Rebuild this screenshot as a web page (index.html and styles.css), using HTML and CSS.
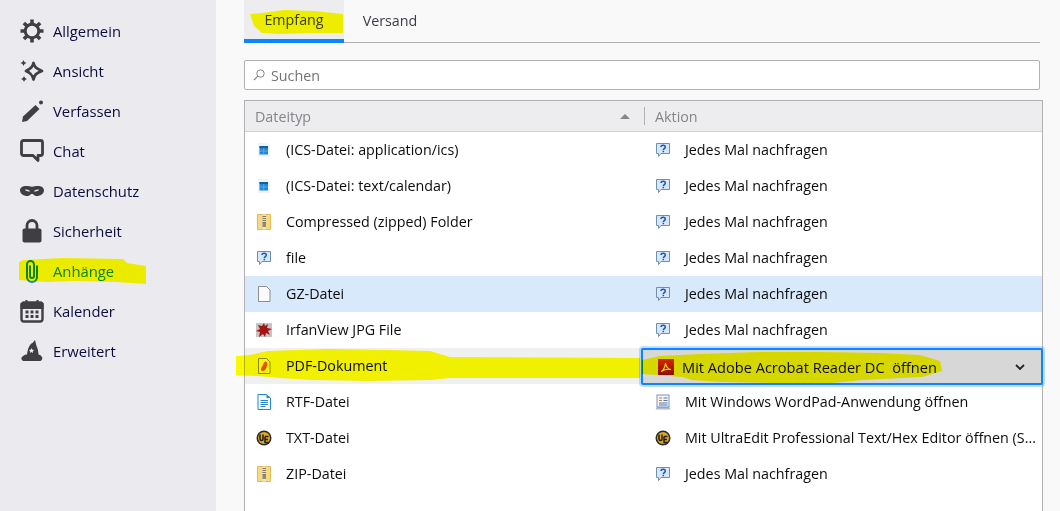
FILE: index.html
```html
<!DOCTYPE html>
<html lang="de">
<head>
<meta charset="utf-8">
<title>Anhänge</title>
<link rel="stylesheet" href="styles.css">
</head>
<body>
<svg class="defs" width="0" height="0">
  <defs>
    <symbol id="q" viewBox="0 0 16 16"><path d="M1.500 1.500h13v10H6l-2.500 3v-3h-2z" fill="#d6e7f8" stroke="#6f8fb0"/><path d="M6 5c0-2.400 4.300-2.400 4.300 0 0 1.600-2 1.600-2 3.200M8.300 9v1.300" fill="none" stroke="#1c54c0" stroke-width="1.500"/></symbol>
    <symbol id="ics" viewBox="0 0 16 16"><path d="M2 1h9l3 3v11H2z" fill="#f0f3f7"/><rect x="3.500" y="4" width="8.500" height="8.500" fill="#1f86d8"/><rect x="3.500" y="4" width="8.500" height="2" fill="#10609f"/><path d="M7.800 6v6.500M3.500 9h8.500" stroke="#8cc3ee" stroke-width=".6"/></symbol>
    <symbol id="zip" viewBox="0 0 16 16"><path d="M1.500 .5h13v15h-13z" fill="#f6d981" stroke="#e0bb5c"/><rect x="6.500" y=".5" width="3.500" height="15" fill="#e9e4cf"/><path d="M6.500 2.500h3.500M6.500 4.500h3.500M6.500 6.500h3.500M6.500 8.500h3.500" stroke="#77756b"/><rect x="6.500" y="9" width="3.500" height="4" fill="#8d8a80"/></symbol>
    <symbol id="ue" viewBox="0 0 16 16"><circle cx="8" cy="8" r="7.500" fill="#2a2a2a"/><circle cx="8" cy="8" r="6" fill="#e0a81c"/><path d="M4 4.500v4.500c0 2 3 2 3 0V4.500M9 6.500h3.500M9 6.500v6h3.500M9 9.500h3" fill="none" stroke="#1c1c1c" stroke-width="1.500"/></symbol>
  </defs>
</svg>
<div class="app">
  <nav class="side">
    <a class="nav">
      <svg class="ico" viewBox="0 0 24 24"><circle cx="12" cy="12" r="6.800" fill="none" stroke="#3f3f42" stroke-width="3"/><path d="M12 .5v5M12 18.500v5M.5 12h5M18.500 12h5M3.900 3.900l3.600 3.600M16.500 16.500l3.600 3.600M3.900 20.100l3.600-3.600M16.500 7.500l3.600-3.600" stroke="#3f3f42" stroke-width="3.600"/></svg>
      <span>Allgemein</span></a>
    <a class="nav">
      <svg class="ico" viewBox="0 0 24 24"><path d="M13.500 4c1 4 2.500 5.500 8.500 8-6 2-7.500 4-8.500 8.500-1-4.500-2.500-6.500-7.500-8.500 5-2.500 6.500-4 7.500-8z" fill="none" stroke="#3f3f42" stroke-width="2.800" stroke-linejoin="round"/><path d="M3.500 1l1 2 2 1-2 1-1 2-1-2-2-1 2-1zM4 17l1 2 2 1-2 1-1 2-1-2-2-1 2-1z" fill="#3f3f42"/></svg>
      <span>Ansicht</span></a>
    <a class="nav">
      <svg class="ico" viewBox="0 0 24 24"><path d="M2 23l1-5.500L15.500 6l4 4L7 22z" fill="#3f3f42"/><circle cx="21" cy="3.500" r="2" fill="#3f3f42"/></svg>
      <span>Verfassen</span></a>
    <a class="nav">
      <svg class="ico" viewBox="0 0 24 24"><path d="M3.500 1.500h17a2 2 0 0 1 2 2v11a2 2 0 0 1-2 2H18v5l-5-5H3.500a2 2 0 0 1-2-2v-11a2 2 0 0 1 2-2z" fill="none" stroke="#3f3f42" stroke-width="2.800" stroke-linejoin="round"/></svg>
      <span>Chat</span></a>
    <a class="nav">
      <svg class="ico" viewBox="0 0 24 24"><path fill-rule="evenodd" d="M6 5c3 0 4 1 6 1s3-1 6-1c3 0 6 2 6 6 0 5-4 8-7 8-3 0-3-3-5-3s-2 3-5 3c-3 0-7-3-7-8 0-4 3-6 6-6zM5 10c0 2 3 3 5 2.500 0-1.500-3-3-5-2.500zM19 10c-2-.5-5 1-5 2.500 2 .5 5-.5 5-2.500z" fill="#3f3f42" transform="matrix(1 0 0 .72 0 3.400)"/></svg>
      <span>Datenschutz</span></a>
    <a class="nav">
      <svg class="ico" viewBox="0 0 24 24"><path d="M7 10V6.500a5 5 0 0 1 10 0V10" fill="none" stroke="#3f3f42" stroke-width="2.800"/><rect x="2.500" y="9.500" width="19" height="14" rx="2" fill="#3f3f42"/></svg>
      <span>Sicherheit</span></a>
    <a class="nav nav-on">
      <svg class="ico" viewBox="0 0 24 24"><path d="M10 6.500V17a2 2 0 0 0 4 0V5.500a3.500 3.500 0 0 0-7 0V18a5 5 0 0 0 10 0V6.500" fill="none" stroke="#0a84ff" stroke-width="2"/></svg>
      <span>Anhänge</span></a>
    <a class="nav">
      <svg class="ico" viewBox="0 0 24 24"><path d="M4 3.500h16a2.500 2.500 0 0 1 2.500 2.500v14a2.500 2.500 0 0 1-2.500 2.500H4A2.500 2.500 0 0 1 1.500 20V6A2.500 2.500 0 0 1 4 3.500z" fill="none" stroke="#3f3f42" stroke-width="2.400"/><path d="M1.500 5h21v4h-21zM6.500 1v5M17.500 1v5" stroke="#3f3f42" stroke-width="2" fill="#3f3f42"/><path d="M5.500 11.500h3v3h-3zM10.500 11.500h3v3h-3zM15.500 11.500h3v3h-3zM5.500 16h3v3h-3zM10.500 16h3v3h-3zM15.500 16h3v3h-3z" fill="#3f3f42"/></svg>
      <span>Kalender</span></a>
    <a class="nav">
      <svg class="ico" viewBox="0 0 24 24"><path d="M15 1l-2.500 3c-3 1-5 6-5.500 12h11.500c0-4-1-7-2-9z" fill="#3f3f42"/><path d="M2 18c2-2 3.500-2.500 5-2.500h11c1.500 0 3 .8 4 2.500 1 1.500-.5 4-2 4H4c-2 0-3.500-2.500-2-4z" fill="#3f3f42"/><path d="M11.500 9l.8 1.700 1.800.2-1.300 1.300.3 1.800-1.600-.9-1.600.9.300-1.800-1.300-1.300 1.800-.2z" fill="#ebebef"/></svg>
      <span>Erweitert</span></a>
  </nav>

  <main class="main">
    <div class="tabs">
      <div class="tab tab-on">Empfang</div>
      <div class="tab">Versand</div>
    </div>
    <div class="search">
      <svg class="search-ico" viewBox="0 0 12 12"><circle cx="7.500" cy="4.500" r="3.700" fill="none" stroke="#85858a"/><path d="M4.800 7.200L1 11" stroke="#85858a" stroke-width="1.200"/></svg>
      <span>Suchen</span>
    </div>
    <div class="table">
      <div class="thead">
        <div class="th th-name"><span>Dateityp</span><i class="sort"></i></div>
        <div class="th th-act"><span>Aktion</span></div>
      </div>
      <div class="row"><div class="cell-name"><svg class="fi"><use href="#ics"/></svg>(ICS-Datei: application/ics)</div><div class="cell-act"><svg class="fi"><use href="#q"/></svg><span class="act-text">Jedes Mal nachfragen</span></div></div>
      <div class="row"><div class="cell-name"><svg class="fi"><use href="#ics"/></svg>(ICS-Datei: text/calendar)</div><div class="cell-act"><svg class="fi"><use href="#q"/></svg><span class="act-text">Jedes Mal nachfragen</span></div></div>
      <div class="row"><div class="cell-name"><svg class="fi"><use href="#zip"/></svg>Compressed (zipped) Folder</div><div class="cell-act"><svg class="fi"><use href="#q"/></svg><span class="act-text">Jedes Mal nachfragen</span></div></div>
      <div class="row"><div class="cell-name"><svg class="fi"><use href="#q"/></svg>file</div><div class="cell-act"><svg class="fi"><use href="#q"/></svg><span class="act-text">Jedes Mal nachfragen</span></div></div>
      <div class="row row-hover"><div class="cell-name"><svg class="fi" viewBox="0 0 16 16"><path d="M2.500 .5h8l3.500 3.500v11.500H2.500z" fill="#fafafa" stroke="#8d8d8d"/></svg>GZ-Datei</div><div class="cell-act"><svg class="fi"><use href="#q"/></svg><span class="act-text">Jedes Mal nachfragen</span></div></div>
      <div class="row"><div class="cell-name"><svg class="fi" viewBox="0 0 16 16"><rect x="0" y="1" width="16" height="14" fill="#c9c4c4"/><path d="M8 1l1 3 3-2-1 4 5 1-4 2 2 4-4-2-1 4-2-3-4 3 1-5-4-1 4-2-2-4 4 1z" fill="#a31515"/></svg>IrfanView JPG File</div><div class="cell-act"><svg class="fi"><use href="#q"/></svg><span class="act-text">Jedes Mal nachfragen</span></div></div>
      <div class="row row-sel"><div class="cell-name"><svg class="fi" viewBox="0 0 16 16"><path d="M2.500 .5h8l3.500 3.500v11.500H2.500z" fill="#fbf6d8" stroke="#8a8a40"/><path d="M9.500 3.500c1.500 0 2 1.500 1.500 4s-1.500 5-4 5.500c-2.500 .5-2.500-2-1.500-3.500 1.500-2 2.500-6 4-6z" fill="#e8501c"/></svg>PDF-Dokument</div>
        <div class="cell-act cell-drop"><svg class="fi" viewBox="0 0 16 16"><defs><linearGradient id="pdfg" x1="0" y1="0" x2="0" y2="1"><stop offset="0" stop-color="#d8231c"/><stop offset="1" stop-color="#8c0f0a"/></linearGradient></defs><rect width="16" height="16" fill="url(#pdfg)"/><path d="M3 12.500c2-1 4-4.500 4.500-8.500.5 4 2.500 6 5.500 6.500-3-.5-7 0-10 2z" fill="none" stroke="#f7e3d3" stroke-width="1.100"/></svg><span class="drop-text">Mit Adobe Acrobat Reader DC &nbsp;öffnen</span><svg class="chev" viewBox="0 0 10 6"><path d="M1 1l4 4 4-4" fill="none" stroke="#222" stroke-width="1.800"/></svg></div></div>
      <div class="row"><div class="cell-name"><svg class="fi" viewBox="0 0 16 16"><path d="M2 .5h8.500L14.500 4v11.500H2z" fill="#f4faff" stroke="#2a86cc"/><path d="M10.500 .5V4h4z" fill="#2a86cc"/><path d="M4.500 6.500h7.500M4.500 8.500h7.500M4.500 10.500h7.500M4.500 12.500h5" stroke="#2a86cc"/></svg>RTF-Datei</div><div class="cell-act"><svg class="fi" viewBox="0 0 16 16"><path d="M2 13l-1.500 2.500h15L14 13z" fill="#a9bcd6"/><rect x="2" y="1" width="12" height="12" fill="#f1f5fb" stroke="#7f93b5"/><path d="M4 4h3M4 6.500h3" stroke="#e0792b"/><path d="M8.500 4h4M8.500 6.500h4M4 9h8.500M4 11h8.500" stroke="#5578a6"/></svg><span class="act-text">Mit Windows WordPad-Anwendung öffnen</span></div></div>
      <div class="row"><div class="cell-name"><svg class="fi"><use href="#ue"/></svg>TXT-Datei</div><div class="cell-act"><svg class="fi"><use href="#ue"/></svg><span class="act-text">Mit UltraEdit Professional Text/Hex Editor öffnen (S...</span></div></div>
      <div class="row"><div class="cell-name"><svg class="fi"><use href="#zip"/></svg>ZIP-Datei</div><div class="cell-act"><svg class="fi"><use href="#q"/></svg><span class="act-text">Jedes Mal nachfragen</span></div></div>
    </div>
  </main>

  <svg class="marker" viewBox="0 0 1060 511" width="1060" height="511">
    <path d="M250 14l12-1 22-3 30 1 29 3v19l-28 0-35 1-18-1-8-7z"/>
    <path d="M19 262l4-2 40-2 60 1 4 4 19 3v18l-30-2-40-1-30 1-27-2z"/>
    <path d="M236 356l14-1 18-4 60-2 60 1 42 1 20 6 190 1v20l-190 0-20 2-60 1-60-1-30-2-22-2-22-1z"/>
    <path d="M642 360l18 -4 40-2 60-2 60 0 60 1 40 2 20 6 2 10-20 6-60 3-30 3-60 0-50-1-30-2-10-3-40-3z"/>
  </svg>
</div>
</body>
</html>
```
FILE: styles.css
```css
* { box-sizing: border-box; }
html, body { margin: 0; height: 511px; overflow: hidden; }
body { font-family: "Open Sans", "Noto Sans", sans-serif; font-size: 14.300px; color: #0c0c0d; }
.defs { position: absolute; }
.app { display: flex; height: 511px; width: 1060px; position: relative; background: #f9f9fa; }

.side { width: 216px; flex: none; background: #ebebef; padding: 11px 0 0 20px; }
.nav { display: flex; align-items: center; gap: 9px; height: 40px; color: #0c0c3d; font-size: 14.800px; }
.ico { width: 24px; height: 24px; flex: none; }
.nav-on { color: #0a84ff; }

.main { flex: none; width: 844px; padding: 0 17px 0 28px; }
.tabs { display: flex; height: 43px; border-bottom: 1px solid #b1b1b3; padding-right: 3px; margin-right: 3px; }
.tab { width: 92px; display: flex; align-items: center; justify-content: center; padding-bottom: 2px; color: #3d3d4a; font-size: 14.300px; }
.tab-on { width: 100px; background: #ededf0; border-bottom: 4px solid #0a84ff; height: 43px; padding-bottom: 0; margin-bottom: -1px; }

.search { display: flex; align-items: center; gap: 6px; height: 30px; margin: 17px 3px 10px 0; padding-left: 8px; background: #fff; border: 1px solid #b1b1b3; border-radius: 2px; color: #737373; }
.search-ico { width: 12px; height: 12px; }

.table { background: #fff; border: 1px solid #b1b1b3; border-bottom: 0; height: 420px; }
.thead { display: flex; height: 31px; background: #ededf0; border-bottom: 1px solid #d2d2d4; color: #85858a; }
.th { display: flex; align-items: center; }
.th-name { width: 399px; padding: 0 10px; justify-content: space-between; }
.th-act { flex: 1; padding-left: 11px; position: relative; }
.th-act::before { content: ""; position: absolute; left: 0; top: 6px; bottom: 6px; width: 1px; background: #b1b1b3; }
.sort { width: 0; height: 0; border: 5px solid transparent; border-top: 0; border-bottom: 5px solid #85858a; margin-right: 4px; }

.row { display: flex; height: 36px; align-items: center; position: relative; padding-bottom: 1px; }
.row-hover { background: #d7e9fa; }
.row-sel { background: #f0f0f0; }
.cell-name { width: 400px; display: flex; align-items: center; padding-left: 11px; gap: 14px; }
.cell-act { flex: 1; display: flex; align-items: center; padding-left: 10px; min-width: 0; }
.fi { width: 16px; height: 16px; flex: none; }
.act-text { margin-left: 14px; white-space: nowrap; }
.cell-drop { position: absolute; left: 396px; right: -1px; top: 0; height: 37px; padding-left: 15px; background: #d7d7d7; border: 2px solid #0a84ff; border-radius: 2px; box-shadow: 0 0 0 2px rgba(10,132,255,.25); }
.drop-text { margin-left: 8px; flex: 1; white-space: nowrap; font-size: 14.600px; }
.chev { width: 10px; height: 6px; margin-right: 16px; }

.marker { position: absolute; left: 0; top: 0; mix-blend-mode: multiply; pointer-events: none; }
.marker path { fill: #ffff00; }
```
